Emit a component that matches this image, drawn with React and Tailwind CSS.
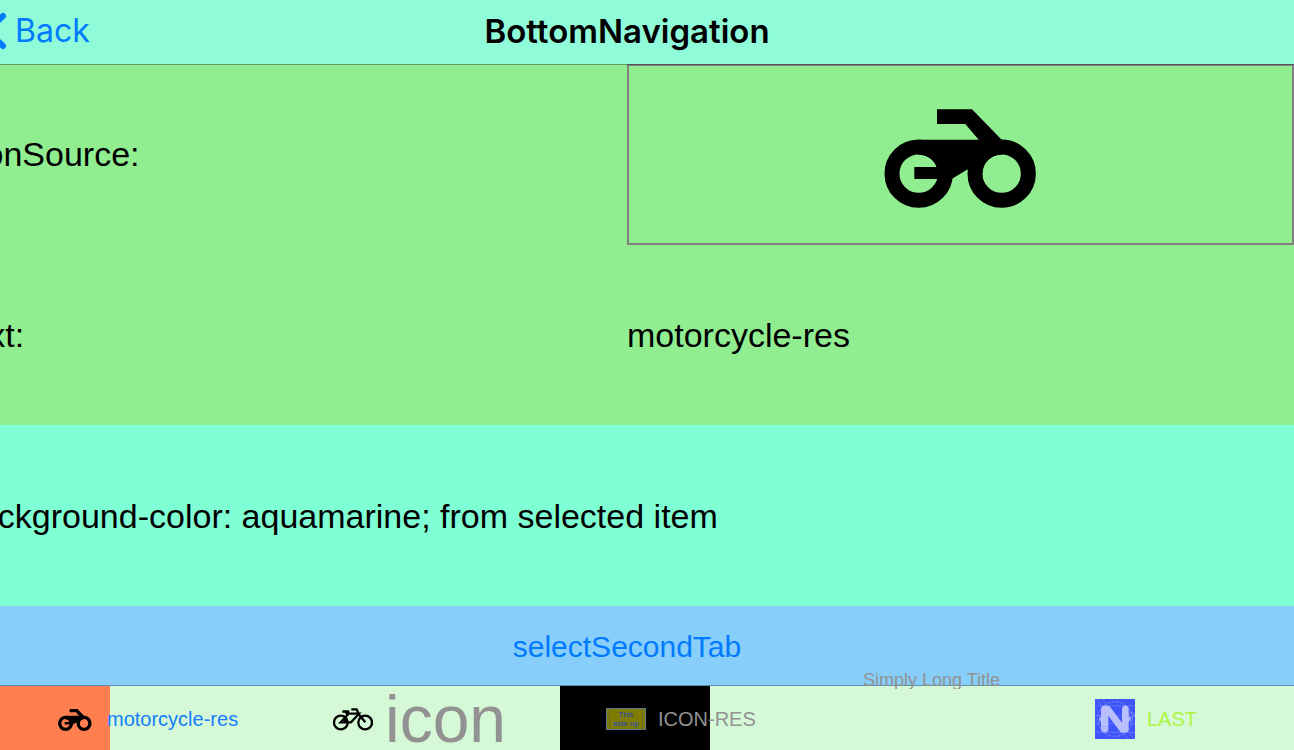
function MotorcycleIcon({ className }) {
  return (
    <svg viewBox="35 11 540 540" className={className} aria-hidden="true">
      <g fill="none" stroke="#000" strokeWidth="45">
        <circle cx="178" cy="340" r="80" />
        <circle cx="427" cy="340" r="80" />
      </g>
      <path d="M178 238H358L318 191H233V147H338L427 238V283A57 57 0 0 0 369 340L323 328L277 356H165V320H232A57 57 0 0 0 178 283Z" />
    </svg>
  );
}

function BicycleIcon({ className }) {
  return (
    <svg viewBox="69 87 120 120" className={className} aria-hidden="true">
      <g fill="none" stroke="#000" strokeWidth="7">
        <circle cx="92.5" cy="157.5" r="20.5" />
        <circle cx="165.500" cy="157.500" r="20.500" />
        <path d="M124 118H140L147 134L166 157M97 124.500H118M107 126L113 134L92 157H123L147 131H113M104 145L108 157" />
      </g>
    </svg>
  );
}

function NativeIcon({ className }) {
  return (
    <svg viewBox="0 0 120 120" className={className} aria-hidden="true">
      <path fill="#3f55fa" d="M0 0H120V120H0Z" />
      <g fill="none" stroke="#8c9bff" strokeWidth="2">
        <path d="M0 50H120M0 73H120M0 100H120M0 20H120M4 0L100 120M22 0L118 120" opacity=".6" />
        <circle cx="60" cy="60" r="52" strokeDasharray="9 4" />
        <circle cx="109" cy="49" r="9" strokeDasharray="5 3" stroke="#c9d0ff" />
        <path d="M15 53V68M105 53V68" stroke="#c9d0ff" strokeWidth="3" />
      </g>
      <path
        fill="#b9bffc"
        d="M30 20H43L81 71V30Q81 20 91 20Q101 20 101 30V50Q101 57 105 60Q101 63 101 70V91Q101 101 92 101H78L40 50V91Q40 101 30 101Q18 101 18 91V70Q18 63 14 60Q18 57 18 50V31Q18 20 30 20Z"
      />
      <circle cx="30" cy="90" r="9" fill="none" stroke="#949fff" strokeWidth="2" />
    </svg>
  );
}

function SideUpIcon() {
  return (
    <span className="flex h-[22px] w-10 shrink-0 border border-[#5f7a8a] bg-[#7f7d00] px-[2px]">
      <span className="flex w-full flex-col items-center border-x border-[#666b2c] pt-px text-[8px] leading-[9px] whitespace-nowrap text-[#2443c4]">
        <span>This</span>
        <span>side up</span>
      </span>
    </span>
  );
}

const tab = "flex h-16 items-center gap-3 pt-[2px] text-xl leading-6 whitespace-nowrap";

export default function App() {
  return (
    <div className="overflow-hidden bg-[#7fffd4] font-['Liberation_Sans',Arial,sans-serif] text-black">
      <div className="-ml-10 flex min-h-screen flex-col">
        <header className="relative z-10 grid h-16 grid-cols-[1fr_auto_1fr] items-center bg-[#8ffbd8] pb-[2px] font-['Inter',sans-serif] leading-10 shadow-[0_1px_0_rgba(0,0,0,0.35)]">
          <a href="#back" className="flex items-center gap-[9px] justify-self-start pl-5 text-[32px] text-[#007aff]">
            <svg viewBox="0 0 26 40" className="h-10 w-[26px]" aria-hidden="true">
              <path d="M23 5L7 20L23 35" fill="none" stroke="#007aff" strokeWidth="6" strokeLinecap="round" strokeLinejoin="round" />
            </svg>
            Back
          </a>
          <h1 className="text-[33px] font-semibold">BottomNavigation</h1>
        </header>

        <main className="flex grow flex-col">
          <div className="grid grow grid-cols-2 grid-rows-3 text-[34px] leading-10">
            <div className="flex items-center bg-[#90ee90]">iconSource:</div>
            <div className="flex items-center justify-center border-2 border-[#808080] bg-[#90ee90]">
              <MotorcycleIcon className="-my-1 h-[180px] w-[180px]" />
            </div>
            <div className="flex items-center bg-[#90ee90]">text:</div>
            <div className="flex items-center bg-[#90ee90]">motorcycle-res</div>
            <div className="col-span-2 flex items-center">
              background-color: aquamarine; from selected item
            </div>
          </div>
          <button type="button" className="h-20 bg-[#87cefa] pt-[2px] text-3xl leading-9 text-[#007aff]">
            selectSecondTab
          </button>
        </main>

        <nav className="relative flex h-16 bg-[#d5f9d6] text-[#929292] shadow-[0_-1px_0_#5c91b5]">
          <button type="button" className={`${tab} w-[300px] bg-linear-to-r from-[#ff7f50] from-50% to-transparent to-50% pl-[95px] text-[#147efb]`}>
            <MotorcycleIcon className="h-10 w-10" />
            motorcycle-res
          </button>
          <button type="button" className={`${tab} w-[300px] pl-[73px]`}>
            <BicycleIcon className="h-10 w-10" />
            <span className="text-[66px] leading-16">icon</span>
          </button>
          <button type="button" className={`${tab} w-[300px] bg-linear-to-r from-black from-50% to-transparent to-50% pl-[46px]`}>
            <SideUpIcon />
            ICON-RES
          </button>
          <button type="button" className="relative h-16 w-[200px] text-lg leading-5 whitespace-nowrap">
            <span className="absolute -top-4 left-[3px] h-[19px] overflow-hidden">Simply Long Title</span>
          </button>
          <button type="button" className={`${tab} grow pl-[35px] text-[#adf542]`}>
            <NativeIcon className="h-10 w-10" />
            LAST
          </button>
        </nav>
      </div>
    </div>
  );
}
